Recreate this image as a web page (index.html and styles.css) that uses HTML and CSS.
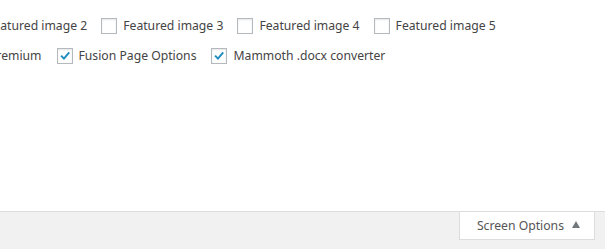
FILE: index.html
```html
<!DOCTYPE html>
<html lang="en">
<head>
  <meta charset="UTF-8">
  <title>Screen Options</title>
  <link rel="stylesheet" href="styles.css">
</head>
<body>
  <div class="screen-meta">
    <!-- Colunas / caixas visiveis -->
    <div class="prefs prefs-top">
      <label class="pref"><span class="box"></span>Featured image 2</label>
      <label class="pref"><span class="box"></span>Featured image 3</label>
      <label class="pref"><span class="box"></span>Featured image 4</label>
      <label class="pref"><span class="box"></span>Featured image 5</label>
    </div>
    <div class="prefs prefs-bottom">
      <label class="pref"><span class="box checked"><svg viewBox="0 0 16 16"><path d="M3.5 7.5 L6.8 11 L12.8 3.8"/></svg></span>Premium</label>
      <label class="pref"><span class="box checked"><svg viewBox="0 0 16 16"><path d="M3.5 7.5 L6.8 11 L12.8 3.8"/></svg></span>Fusion Page Options</label>
      <label class="pref"><span class="box checked"><svg viewBox="0 0 16 16"><path d="M3.5 7.5 L6.8 11 L12.8 3.8"/></svg></span>Mammoth .docx converter</label>
    </div>
  </div>

  <div class="meta-links">
    <button class="meta-toggle">Screen Options <span class="arrow"></span></button>
  </div>
</body>
</html>
```

FILE: styles.css
```css
/* ======= Base ======= */
body {
  margin: 0;
  background: #f1f1f1;
  font-family: "Noto Sans", "Open Sans", sans-serif;
  font-size: 12.2px;
  color: #444;
  overflow: hidden;
}

/* Painel branco */
.screen-meta {
  background: #fff;
  border-bottom: 1px solid #ddd;
  height: 212px;
  padding-top: 18px;
  box-sizing: border-box;
  overflow: hidden;
}

.prefs {
  display: flex;
  gap: 14px;
  white-space: nowrap;
  height: 16px;
}

.prefs-top {
  margin-left: -35px;
}

.prefs-bottom {
  margin-top: 14px;
  margin-left: -33px;
  gap: 15px;
}

.pref {
  display: flex;
  align-items: center;
  gap: 6px;
  line-height: 16px;
}

.box {
  width: 14px;
  height: 14px;
  border: 1px solid #b4b9be;
  background: #fff;
  box-shadow: inset 0 1px 2px rgba(0, 0, 0, 0.1);
  flex: none;
  display: flex;
}

.box svg {
  width: 14px;
  height: 14px;
}

.box path {
  fill: none;
  stroke: #1e8cbe;
  stroke-width: 2.2;
}

/* Aba Screen Options */
.meta-links {
  display: flex;
  justify-content: flex-end;
  padding-right: 10px;
}

.meta-toggle {
  height: 28px;
  padding: 0 14px 0 17px;
  background: #fff;
  border: 1px solid #ddd;
  border-top: none;
  box-shadow: 0 1px 1px rgba(0, 0, 0, 0.04);
  font-family: inherit;
  font-size: 12.2px;
  color: #555;
  display: flex;
  align-items: center;
  gap: 8px;
  cursor: pointer;
}

.arrow {
  width: 0;
  height: 0;
  border-left: 4px solid transparent;
  border-right: 4px solid transparent;
  border-bottom: 7px solid #72777c;
  margin-top: -2px;
}
```
